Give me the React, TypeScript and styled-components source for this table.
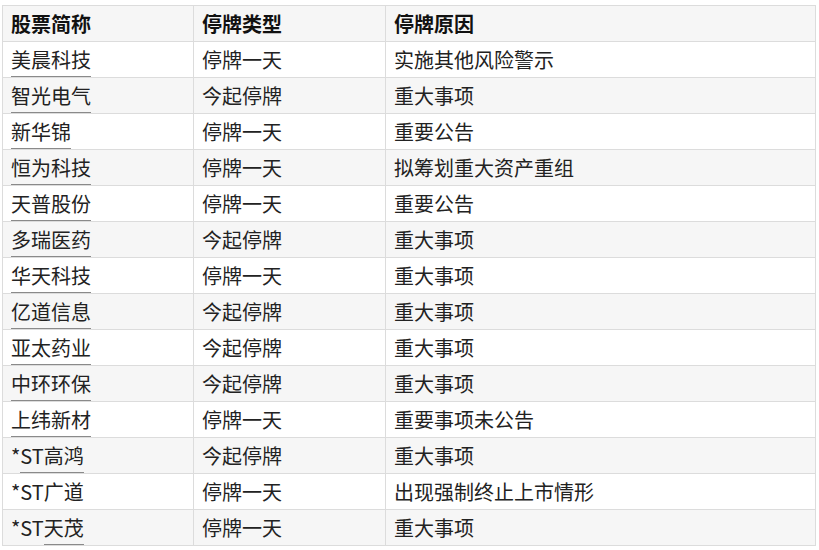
import React from "react";
import styled, { createGlobalStyle } from "styled-components";

const Global = createGlobalStyle`
  html, body { margin: 0; padding: 0; background: #fff; }
  body { font-family: "Noto Sans CJK SC", "Noto Sans", sans-serif; }
`;

const Wrap = styled.div`
  padding: 5px 0 0 2px;
`;

const Table = styled.table`
  border-collapse: collapse;
  width: 814px;
  table-layout: fixed;
  font-family: "Noto Sans CJK SC", "Noto Sans", sans-serif;
  font-size: 20px;
  color: #222;
`;

const HeadCell = styled.th`
  height: 35px;
  padding: 0 8px;
  text-align: left;
  font-weight: 700;
  border: 1px solid #dcdcdc;
  background: #f6f6f6;
  color: #111;
  line-height: 20px;
`;

const Row = styled.tr<{ $alt: boolean }>`
  background: ${(p) => (p.$alt ? "#f6f6f6" : "#ffffff")};
`;

const Cell = styled.td`
  height: 35px;
  padding: 0 8px;
  border: 1px solid #dcdcdc;
  line-height: 20px;
  white-space: nowrap;
`;

const Link = styled.a`
  color: inherit;
  text-decoration: none;
  border-bottom: 1px solid #8a8a8a;
  padding-bottom: 2px;
`;

type Name = { pre?: string; link?: string; post?: string };

const rows: { name: Name; type: string; reason: string }[] = [
  { name: { link: "美晨科技" }, type: "停牌一天", reason: "实施其他风险警示" },
  { name: { link: "智光电气" }, type: "今起停牌", reason: "重大事项" },
  { name: { link: "新华锦" }, type: "停牌一天", reason: "重要公告" },
  { name: { link: "恒为科技" }, type: "停牌一天", reason: "拟筹划重大资产重组" },
  { name: { link: "天普股份" }, type: "停牌一天", reason: "重要公告" },
  { name: { link: "多瑞医药" }, type: "今起停牌", reason: "重大事项" },
  { name: { link: "华天科技" }, type: "停牌一天", reason: "重大事项" },
  { name: { link: "亿道信息" }, type: "今起停牌", reason: "重大事项" },
  { name: { link: "亚太药业" }, type: "今起停牌", reason: "重大事项" },
  { name: { link: "中环环保" }, type: "今起停牌", reason: "重大事项" },
  { name: { link: "上纬新材" }, type: "停牌一天", reason: "重要事项未公告" },
  { name: { pre: "*", link: "ST高鸿" }, type: "今起停牌", reason: "重大事项" },
  { name: { pre: "*ST广道" }, type: "停牌一天", reason: "出现强制终止上市情形" },
  { name: { pre: "*ST", link: "天茂" }, type: "停牌一天", reason: "重大事项" },
];

export default function App() {
  return (
    <Wrap>
      <Global />
      <Table>
        <colgroup>
          <col style={{ width: 191 }} />
          <col style={{ width: 192 }} />
          <col />
        </colgroup>
        <thead>
          <tr>
            <HeadCell>股票简称</HeadCell>
            <HeadCell>停牌类型</HeadCell>
            <HeadCell>停牌原因</HeadCell>
          </tr>
        </thead>
        <tbody>
          {rows.map((r, i) => (
            <Row key={i} $alt={i % 2 === 1}>
              <Cell>
                {r.name.pre}
                {r.name.link && <Link href="#">{r.name.link}</Link>}
                {r.name.post}
              </Cell>
              <Cell>{r.type}</Cell>
              <Cell>{r.reason}</Cell>
            </Row>
          ))}
        </tbody>
      </Table>
    </Wrap>
  );
}
